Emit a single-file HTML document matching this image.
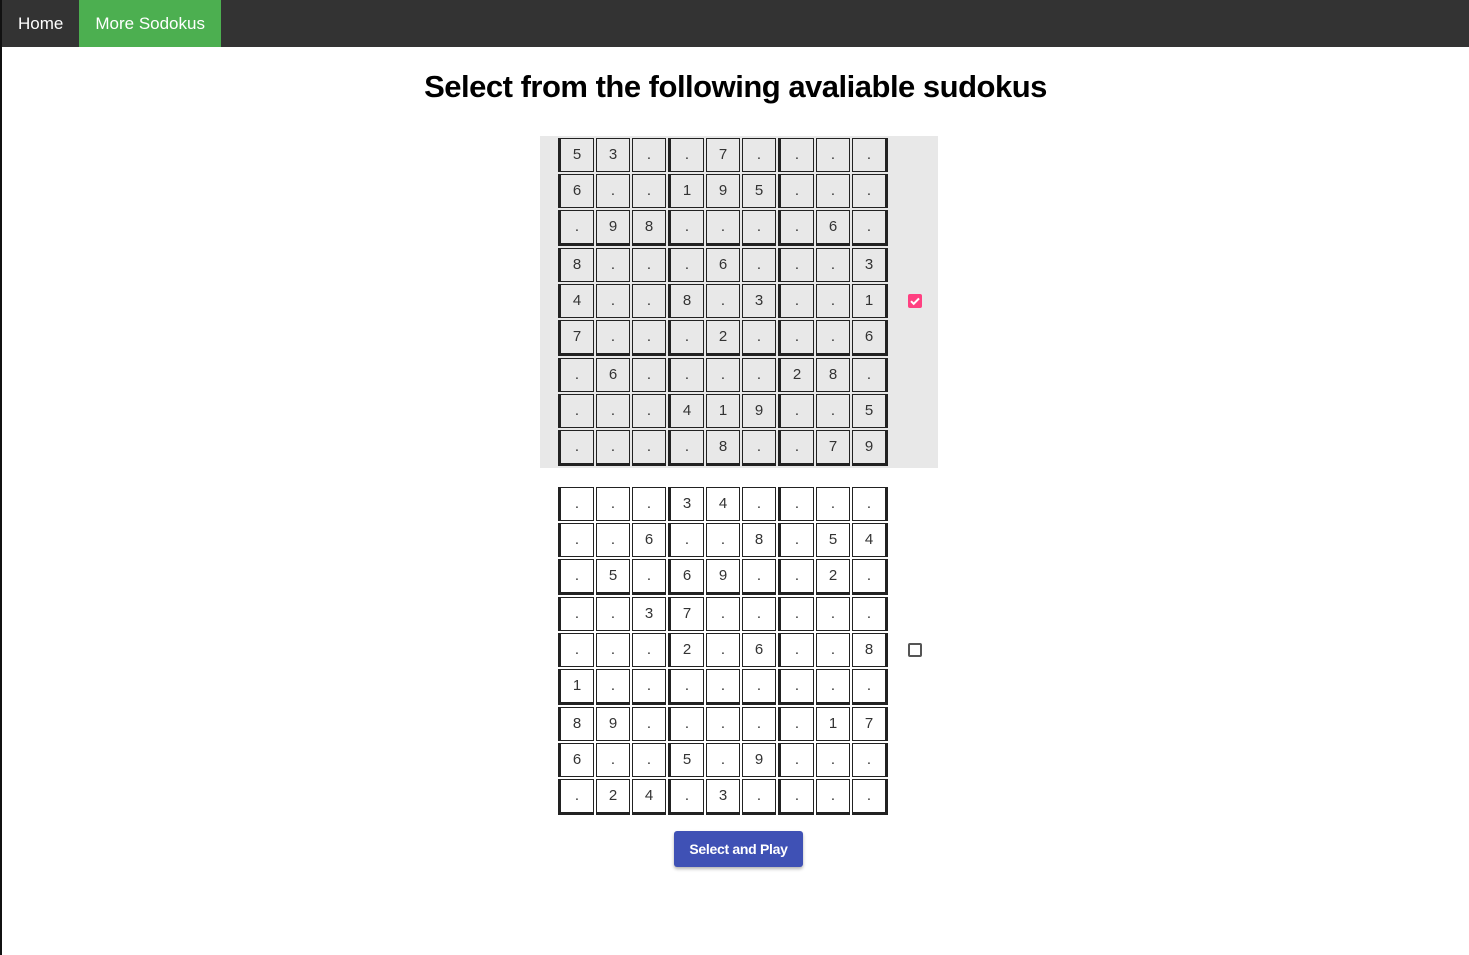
<!DOCTYPE html>
<html><head><meta charset="utf-8"><style>
body{margin:0;font-family:"Liberation Sans",Roboto,sans-serif;background:#fff;border-left:2px solid #111;min-height:955px;box-sizing:border-box;}
.nav{height:47px;background:#333;display:flex}
.nav a{color:#fff;font-size:17px;line-height:47px;padding:0 16px;text-decoration:none}
.nav a.act{background:#4caf50}
h1{text-align:center;font-size:31px;margin:22px 0 31px;color:#000;letter-spacing:-0.5px}
.g{position:relative;width:398px;margin:0 auto 17px;padding:1px 0 1px 17px;box-sizing:border-box;margin-left:538px}
.g.sel{background:#e8e8e8}
.r{display:flex}
.c{box-sizing:border-box;width:34px;height:34px;border:1px solid #222;margin:1px;text-align:center;font-size:15px;line-height:32px;color:#333}
.r .c:nth-child(3n+1){border-left:3px solid #222;width:36px}
.r .c:nth-child(9){border-right:3px solid #222;width:36px}
.r:nth-child(3n) .c{border-bottom:3px solid #222;height:36px}
.cb{position:absolute;left:368px;top:158px;width:14px;height:14px;box-sizing:border-box;border:2px solid #555;border-radius:2px}
.cb.on{background:#ff4081;border:none}
.btn{display:block;margin:-3px auto 0;margin-left:672px;width:129px;height:36px;background:#3f51b5;color:#fff;border:none;border-radius:3px;font-size:14px;font-weight:bold;box-shadow:0 2px 3px rgba(0,0,0,.3);font-family:"Liberation Sans",sans-serif;letter-spacing:-0.3px}
</style></head><body>
<div class="nav"><a>Home</a><a class="act">More Sodokus</a></div>
<h1>Select from the following avaliable sudokus</h1>
<div class="g sel">
<div class="r"><div class="c">5</div><div class="c">3</div><div class="c">.</div><div class="c">.</div><div class="c">7</div><div class="c">.</div><div class="c">.</div><div class="c">.</div><div class="c">.</div></div>
<div class="r"><div class="c">6</div><div class="c">.</div><div class="c">.</div><div class="c">1</div><div class="c">9</div><div class="c">5</div><div class="c">.</div><div class="c">.</div><div class="c">.</div></div>
<div class="r"><div class="c">.</div><div class="c">9</div><div class="c">8</div><div class="c">.</div><div class="c">.</div><div class="c">.</div><div class="c">.</div><div class="c">6</div><div class="c">.</div></div>
<div class="r"><div class="c">8</div><div class="c">.</div><div class="c">.</div><div class="c">.</div><div class="c">6</div><div class="c">.</div><div class="c">.</div><div class="c">.</div><div class="c">3</div></div>
<div class="r"><div class="c">4</div><div class="c">.</div><div class="c">.</div><div class="c">8</div><div class="c">.</div><div class="c">3</div><div class="c">.</div><div class="c">.</div><div class="c">1</div></div>
<div class="r"><div class="c">7</div><div class="c">.</div><div class="c">.</div><div class="c">.</div><div class="c">2</div><div class="c">.</div><div class="c">.</div><div class="c">.</div><div class="c">6</div></div>
<div class="r"><div class="c">.</div><div class="c">6</div><div class="c">.</div><div class="c">.</div><div class="c">.</div><div class="c">.</div><div class="c">2</div><div class="c">8</div><div class="c">.</div></div>
<div class="r"><div class="c">.</div><div class="c">.</div><div class="c">.</div><div class="c">4</div><div class="c">1</div><div class="c">9</div><div class="c">.</div><div class="c">.</div><div class="c">5</div></div>
<div class="r"><div class="c">.</div><div class="c">.</div><div class="c">.</div><div class="c">.</div><div class="c">8</div><div class="c">.</div><div class="c">.</div><div class="c">7</div><div class="c">9</div></div>
<div class="cb on"><svg width="14" height="14" viewBox="0 0 14 14"><path d="M3 7.2l2.7 2.6L11 4.4" stroke="#fff" stroke-width="2" fill="none"/></svg></div>
</div>
<div class="g">
<div class="r"><div class="c">.</div><div class="c">.</div><div class="c">.</div><div class="c">3</div><div class="c">4</div><div class="c">.</div><div class="c">.</div><div class="c">.</div><div class="c">.</div></div>
<div class="r"><div class="c">.</div><div class="c">.</div><div class="c">6</div><div class="c">.</div><div class="c">.</div><div class="c">8</div><div class="c">.</div><div class="c">5</div><div class="c">4</div></div>
<div class="r"><div class="c">.</div><div class="c">5</div><div class="c">.</div><div class="c">6</div><div class="c">9</div><div class="c">.</div><div class="c">.</div><div class="c">2</div><div class="c">.</div></div>
<div class="r"><div class="c">.</div><div class="c">.</div><div class="c">3</div><div class="c">7</div><div class="c">.</div><div class="c">.</div><div class="c">.</div><div class="c">.</div><div class="c">.</div></div>
<div class="r"><div class="c">.</div><div class="c">.</div><div class="c">.</div><div class="c">2</div><div class="c">.</div><div class="c">6</div><div class="c">.</div><div class="c">.</div><div class="c">8</div></div>
<div class="r"><div class="c">1</div><div class="c">.</div><div class="c">.</div><div class="c">.</div><div class="c">.</div><div class="c">.</div><div class="c">.</div><div class="c">.</div><div class="c">.</div></div>
<div class="r"><div class="c">8</div><div class="c">9</div><div class="c">.</div><div class="c">.</div><div class="c">.</div><div class="c">.</div><div class="c">.</div><div class="c">1</div><div class="c">7</div></div>
<div class="r"><div class="c">6</div><div class="c">.</div><div class="c">.</div><div class="c">5</div><div class="c">.</div><div class="c">9</div><div class="c">.</div><div class="c">.</div><div class="c">.</div></div>
<div class="r"><div class="c">.</div><div class="c">2</div><div class="c">4</div><div class="c">.</div><div class="c">3</div><div class="c">.</div><div class="c">.</div><div class="c">.</div><div class="c">.</div></div>
<div class="cb"></div>
</div>
<button class="btn">Select and Play</button>
</body></html>
